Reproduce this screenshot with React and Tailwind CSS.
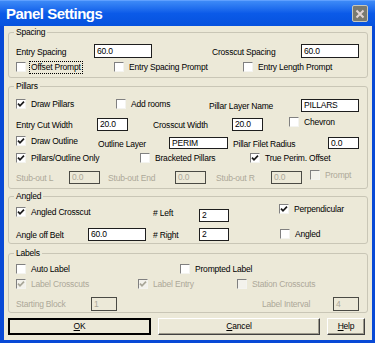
import React from "react";

const Tick = ({ disabled }) => (
  <svg width="8" height="8" viewBox="0 0 8 8">
    <path
      d="M1 3.6 L3 5.8 L7 1.6"
      fill="none"
      stroke={disabled ? "#a8a698" : "#1a1a1a"}
      strokeWidth="1.7"
    />
  </svg>
);

const Lbl = ({ children, cls = "", disabled }) => (
  <span
    className={`shrink-0 h-[12px] leading-[12px] whitespace-nowrap ${
      disabled ? "text-[#aca899]" : "text-black"
    } ${cls}`}
  >
    {children}
  </span>
);

const Box = ({ value, cls = "", disabled }) => (
  <div
    className={`shrink-0 flex items-center pl-[2px] border overflow-hidden whitespace-nowrap ${
      disabled
        ? "border-[#4a4a44] bg-[#ece9d8] text-[#aca899]"
        : "border-[#1e1e1e] bg-white text-black"
    } ${cls}`}
  >
    {value}
  </div>
);

const Check = ({ label, checked, disabled, focus, cls = "" }) => (
  <div className={`shrink-0 flex items-center h-[12px] ${cls}`}>
    <span
      className={`w-[10px] h-[10px] flex items-center justify-center border border-t-[#808080] border-l-[#808080] border-b-[#f4f4f0] border-r-[#f4f4f0] ${
        disabled ? "bg-[#f3f2ec]" : "bg-white"
      }`}
    >
      {checked && <Tick disabled={disabled} />}
    </span>
    <span
      className={`ml-[3px] px-[1px] leading-[11px] whitespace-nowrap border ${
        focus ? "border-dotted border-black" : "border-transparent"
      } ${disabled ? "text-[#aca899]" : "text-black"}`}
    >
      {label}
    </span>
  </div>
);

const Group = ({ title, cls, children }) => (
  <div
    className={`relative w-[360px] shrink-0 flex flex-col pl-[7px] border border-[#c9c6b6] rounded-[3px] ${cls}`}
  >
    <span className="absolute top-[-7px] left-[5px] px-[2px] h-[12px] leading-[12px] bg-[#ece9d8]">
      {title}
    </span>
    {children}
  </div>
);

const Row = ({ cls, children }) => (
  <div className={`flex items-start shrink-0 ${cls}`}>{children}</div>
);

const Sp = ({ cls }) => <div className={`shrink-0 ${cls}`} />;

const Btn = ({ u, rest, cls, def }) => (
  <button
    className={`shrink-0 h-[17px] flex items-center justify-center bg-[#ece9d8] ${
      def
        ? "border-2 border-black"
        : "border border-t-white border-l-white border-b-[#404040] border-r-[#404040] shadow-[inset_-1px_-1px_0_#9d9a8c]"
    } ${cls}`}
  >
    <span>
      <span className="underline">{u}</span>
      {rest}
    </span>
  </button>
);

export default function App() {
  return (
    <div className="w-[375px] h-[343px] bg-[#0849d6] flex flex-col overflow-hidden font-['Liberation_Sans',Arial,sans-serif] text-[8.5px] tracking-[-0.2px] text-black">
      {/* Title bar */}
      <div className="h-[26px] shrink-0 flex items-center pl-[6px] pr-[7px] bg-gradient-to-b from-[#3d8af7] via-[#0b5ae8] to-[#0652de] border-t border-[#5fa0ff]">
        <span className="flex-1 text-white font-bold text-[15px] tracking-[-0.5px] leading-none">
          Panel Settings
        </span>
        <div className="w-[16px] h-[17px] rounded-[2px] bg-[#7a7a70] border border-[#c8c8bc] flex items-center justify-center">
          <svg width="10" height="10" viewBox="0 0 10 10">
            <path d="M1.5 1.5 L8.5 8.5 M8.5 1.5 L1.5 8.5" stroke="#e2d4d4" strokeWidth="2" />
          </svg>
        </div>
      </div>

      {/* Dialog body */}
      <div className="ml-[4px] w-[368px] h-[314px] shrink-0 bg-[#ece9d8] pl-[4px] pt-[6px] flex flex-col">
        <Group title="Spacing" cls="h-[46px] pt-[11px]">
          <Row cls="h-[14px]">
            <Lbl cls="w-[78px] mt-[2px]">Entry Spacing</Lbl>
            <Box value="60.0" cls="w-[58px] h-[14px]" />
            <Sp cls="w-[60px]" />
            <Lbl cls="w-[89px] mt-[2px]">Crosscut Spacing</Lbl>
            <Box value="60.0" cls="w-[58px] h-[14px]" />
          </Row>
          <Row cls="h-[12px] mt-[3px]">
            <Check label="Offset Prompt" focus cls="w-[98px]" />
            <Check label="Entry Spacing Prompt" cls="w-[129px]" />
            <Check label="Entry Length Prompt" />
          </Row>
        </Group>

        <Group title="Pillars" cls="h-[103px] mt-[8px] pt-[11px]">
          <Row cls="h-[14px]">
            <Check label="Draw Pillars" checked cls="w-[100px]" />
            <Check label="Add rooms" cls="w-[93px]" />
            <Lbl cls="w-[92px] mt-[2px]">Pillar Layer Name</Lbl>
            <Box value="PILLARS" cls="w-[58px] h-[13px] mt-[1px]" />
          </Row>
          <Row cls="h-[15px] mt-[4px]">
            <Lbl cls="w-[81px] mt-[3px]">Entry Cut Width</Lbl>
            <Box value="20.0" cls="w-[31px] h-[13px] mt-[2px]" />
            <Sp cls="w-[25px]" />
            <Lbl cls="w-[79px] mt-[3px]">Crosscut Width</Lbl>
            <Box value="20.0" cls="w-[31px] h-[13px] mt-[2px]" />
            <Sp cls="w-[26px]" />
            <Check label="Chevron" />
          </Row>
          <Row cls="h-[14px] mt-[4px]">
            <Check label="Draw Outline" checked cls="w-[82px]" />
            <Lbl cls="w-[71px] mt-[3px]">Outline Layer</Lbl>
            <Box value="PERIM" cls="w-[59px] h-[12px] mt-[2px]" />
            <Sp cls="w-[5px]" />
            <Lbl cls="w-[95px] mt-[3px]">Pillar Filet Radius</Lbl>
            <Box value="0.0" cls="w-[31px] h-[12px] mt-[2px]" />
          </Row>
          <Row cls="h-[12px] mt-[3px]">
            <Check label="Pillars/Outline Only" checked cls="w-[124px]" />
            <Check label="Bracketed Pillars" cls="w-[110px]" />
            <Check label="True Perim. Offset" checked />
          </Row>
          <Row cls="h-[15px] mt-[5px]">
            <Lbl disabled cls="w-[53px] mt-[3px]">Stub-out L</Lbl>
            <Box disabled value="0.0" cls="w-[31px] h-[13px] mt-[2px]" />
            <Sp cls="w-[8px]" />
            <Lbl disabled cls="w-[67px] mt-[3px]">Stub-out End</Lbl>
            <Box disabled value="0.0" cls="w-[31px] h-[13px] mt-[2px]" />
            <Sp cls="w-[10px]" />
            <Lbl disabled cls="w-[55px] mt-[3px]">Stub-out R</Lbl>
            <Box disabled value="0.0" cls="w-[31px] h-[13px] mt-[2px]" />
            <Sp cls="w-[8px]" />
            <Check label="Prompt" disabled />
          </Row>
        </Group>

        <Group title="Angled" cls="h-[48px] mt-[7px] pt-[6px]">
          <Row cls="h-[19px]">
            <Check label="Angled Crosscut" checked cls="w-[137px] mt-[3px]" />
            <Lbl cls="w-[46px] mt-[4px]"># Left</Lbl>
            <Box value="2" cls="w-[30px] h-[13px] mt-[6px]" />
            <Sp cls="w-[50px]" />
            <Check label="Perpendicular" checked />
          </Row>
          <Row cls="h-[13px] mt-[6px]">
            <Lbl cls="w-[72px] mt-[1px]">Angle off Belt</Lbl>
            <Box value="60.0" cls="w-[58px] h-[13px]" />
            <Sp cls="w-[7px]" />
            <Lbl cls="w-[46px] mt-[1px]"># Right</Lbl>
            <Box value="2" cls="w-[30px] h-[13px]" />
            <Sp cls="w-[51px]" />
            <Check label="Angled" />
          </Row>
        </Group>

        <Group title="Labels" cls="h-[60px] mt-[9px] pt-[9px]">
          <Row cls="h-[12px]">
            <Check label="Auto Label" cls="w-[164px]" />
            <Check label="Prompted Label" />
          </Row>
          <Row cls="h-[12px] mt-[3px]">
            <Check label="Label Crosscuts" checked disabled cls="w-[122px]" />
            <Check label="Label Entry" checked disabled cls="w-[99px]" />
            <Check label="Station Crosscuts" disabled />
          </Row>
          <Row cls="h-[14px] mt-[7px]">
            <Lbl disabled cls="w-[75px] mt-[1px]">Starting Block</Lbl>
            <Box disabled value="1" cls="w-[26px] h-[14px]" />
            <Sp cls="w-[145px]" />
            <Lbl disabled cls="w-[71px] mt-[1px]">Label Interval</Lbl>
            <Box disabled value="4" cls="w-[26px] h-[14px]" />
          </Row>
        </Group>

        <div className="flex mt-[5px] gap-[7px]">
          <Btn u="O" rest="K" def cls="w-[143px]" />
          <Btn u="C" rest="ancel" cls="w-[162px]" />
          <Btn u="H" rest="elp" cls="w-[38px]" />
        </div>
      </div>
    </div>
  );
}
